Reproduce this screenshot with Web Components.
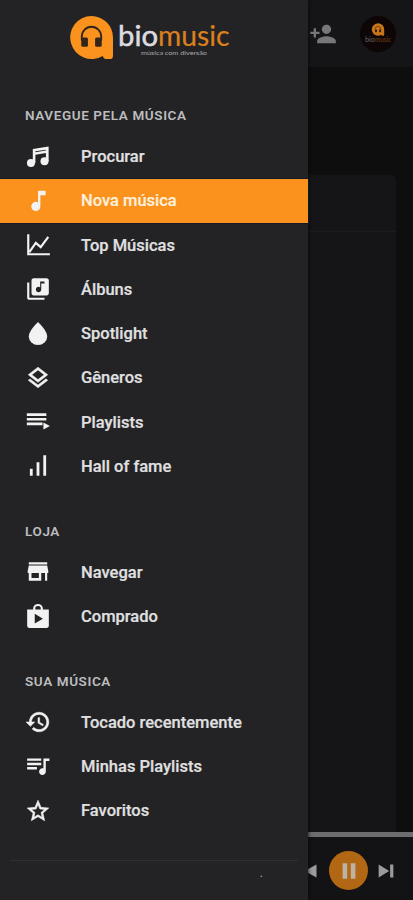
<!DOCTYPE html>
<html lang="pt-BR">
<head>
<meta charset="utf-8">
<title>biomusic</title>
<style>
html,body{margin:0;height:100%;background:#0e0e0f}
body{font-family:Roboto,"Liberation Sans",sans-serif;overflow:hidden}
</style>
</head>
<body>
<music-app></music-app>
<script>
const ICONS = {
  notes: '<circle cx="5.500" cy="17.500" r="3.700"/><circle cx="18" cy="16" r="3.700"/><path d="M7.200 17.500V4.700L21.800 2.400V16h-2.500V8.400L9.600 9.900v7.600zM9.600 6.700v.9l9.700-1.500v-.9z" fill-rule="evenodd"/>',
  note: '<path d="M12 2.500v10.800c-.6-.3-1.300-.5-2-.5a4.200 4.200 0 1 0 4.200 4.200V6.700H19V2.500z"/>',
  chart: '<path d="M3 2v18.500h20M4 18.500l6-8.500 4.500 4L21.500 4.500" fill="none" stroke="currentColor" stroke-width="2"/>',
  album: '<path d="M20 2H8c-1.100 0-2 .9-2 2v12c0 1.100.9 2 2 2h12c1.100 0 2-.9 2-2V4c0-1.100-.9-2-2-2zm-2 5h-3v5.500c0 1.380-1.120 2.500-2.500 2.500S10 13.880 10 12.500s1.120-2.500 2.500-2.500c.570 0 1.080.190 1.500.510V5h4v2zM4 6H2v14c0 1.100.9 2 2 2h14v-2H4V6z"/>',
  drop: '<path d="M12 1C12 1 3.500 9 3.500 14.200a8.500 8 0 0 0 17 0C20.500 9 12 1 12 1z"/>',
  layers: '<path d="M11.990 18.540l-7.370-5.730L3 14.070l9 7 9-7-1.630-1.270-7.380 5.740zM12 16l7.360-5.730L21 9l-9-7-9 7 1.630 1.270L12 16zm0-11.470L17.740 9 12 13.470 6.260 9 12 4.530z" stroke="currentColor" stroke-width=".5"/>',
  playlist: '<path d="M1.700 4h18v2.500h-18zM1.700 8.200h18v2.500h-18zM1.700 12.500h14.500v2.500H1.700zM17 12.500l6 3.200-6 3.300z"/>',
  bars: '<path d="M4.500 14.500h2.600V21H4.500zM10.700 8.500h2.600V21h-2.600zM16.900 2h2.600v19h-2.600z"/>',
  store: '<path d="M20.500 3h-17v2h17V3zM21.500 13v-2l-1-5h-17l-1 5v2h1v7h11.500v-7h3.500v7h2v-7h1zM12.800 17.500H6V13h6.800v4.500z"/>',
  bag: '<path d="M16.500 6V5a4.500 4 0 0 0-9 0v1H2v15c0 1.110.890 2 2 2h16c1.110 0 2-.890 2-2V6h-5.500zm-7-1a2.500 2.200 0 0 1 5 0v1h-5zM9 19v-9l7.500 4.500L9 19z"/>',
  history: '<path d="M13 3c-4.970 0-9 4.030-9 9H1l3.890 3.890.070.140L9 12H6c0-3.870 3.130-7 7-7s7 3.130 7 7-3.130 7-7 7c-1.930 0-3.680-.790-4.940-2.060l-1.420 1.420C8.270 19.990 10.510 21 13 21c4.970 0 9-4.030 9-9s-4.030-9-9-9zm-1 5v5l4.280 2.540.720-1.210-3.500-2.080V8H12z" stroke="currentColor" stroke-width=".5"/>',
  queue: '<path d="M15 5H2v2.200h13V5zm0 4H2v2.200h13V9zM2 15.200h9V13H2v2.200zM17 5v9.180c-.310-.110-.650-.180-1-.180-1.660 0-3 1.540-3 3.200s1.340 3 3 3 3.200-1.340 3.200-3V7.300h3.300V5H17z"/>',
  star: '<path d="M22 9.240l-7.190-.620L12 2 9.190 8.630 2 9.240l5.460 4.730L5.820 21 12 17.270 18.180 21l-1.630-7.030L22 9.240zM12 15.400l-3.760 2.270 1-4.280-3.320-2.880 4.380-.380L12 6.100l1.710 4.040 4.380.380-3.320 2.880 1 4.280L12 15.400z" stroke="currentColor" stroke-width=".5"/>',
  person: '<path d="M15 12c2.210 0 4-1.790 4-4s-1.790-4-4-4-4 1.790-4 4 1.790 4 4 4zm-9-2V7H4v3H1v2h3v3h2v-3h3v-2H6zm9 4c-2.670 0-8 1.340-8 4v2h16v-2c0-2.660-5.330-4-8-4z"/>',
  prev: '<path d="M18 5v14L5 12zM2 5h2v14H2z"/>',
  pause: '<path d="M5 3.500h5v17H5zM14 3.500h5v17h-5z"/>',
  next: '<path d="M4 5l11.500 7L4 19zM16.500 5H20v14h-3.500z"/>'
};
const define = (name, html) => customElements.define(name, class extends HTMLElement {
  constructor(){ super(); this.attachShadow({mode:'open'}).innerHTML = html; }
});

customElements.define('app-icon', class extends HTMLElement {
  connectedCallback(){
    const root = this.shadowRoot || this.attachShadow({mode:'open'});
    root.innerHTML = `<style>:host{display:block;width:26px;height:26px;flex:none}svg{display:block;width:100%;height:100%}</style>
    <svg viewBox="0 0 24 24" fill="currentColor">${ICONS[this.getAttribute('name')]}</svg>`;
  }
});

define('brand-mark', `<style>:host{display:block}svg{display:block;width:100%;height:100%}</style>
<svg viewBox="0 0 44 44"><path fill="#fb921d" d="M22 1a21 21 0 0 1 21 21v18a3 3 0 0 1-3 3h-3a4 4 0 0 1-4-3A21 21 0 1 1 22 1z"/>
<path d="M12.500 25v-4a9.500 9.500 0 0 1 19 0v4" fill="none" stroke="#33251a" stroke-width="1.800"/>
<rect x="12" y="22" width="6.500" height="9" rx="1.500" fill="#33251a"/><rect x="25.500" y="22" width="6.500" height="9" rx="1.500" fill="#33251a"/></svg>`);

define('brand-logo', `<style>:host{display:flex;height:100px;box-sizing:border-box;padding:15px 0 0 69px}
brand-mark{width:45px;height:45px;flex:none}.word{width:116px;height:50px;display:block;margin-left:3px}</style>
<brand-mark></brand-mark>
<svg class="word" viewBox="0 0 116 50" font-family="Lato,sans-serif">
<text x="1" y="31" font-size="28" fill="#dcdce0" stroke="#dcdce0" stroke-width=".5" textLength="40" lengthAdjust="spacingAndGlyphs">bio</text>
<text x="41" y="31" font-size="28" fill="#d9801f" stroke="#d9801f" stroke-width=".2" textLength="71.500" lengthAdjust="spacingAndGlyphs">music</text>
<text x="24" y="40" font-size="6.500" fill="#a9a9ab" textLength="66" lengthAdjust="spacingAndGlyphs">música com diversão</text></svg>`);

customElements.define('nav-entry', class extends HTMLElement {
  constructor(){ super(); this.attachShadow({mode:'open'}); }
  connectedCallback(){
    this.shadowRoot.innerHTML = `<style>:host{display:flex;align-items:center;height:44.250px;box-sizing:border-box;padding-left:25px;color:#e0e0e1;font-size:16.500px;font-weight:500;white-space:nowrap;-webkit-text-stroke:.2px currentColor}
    :host([active]){background:#fb921d;color:#fff0dc;box-shadow:0 0 0 1px #101a28}
    app-icon{margin-right:30px;color:#f2f2f2}</style>
    <app-icon name="${this.getAttribute('icon')}"></app-icon><span><slot></slot></span>`;
  }
});

define('nav-section', `<style>:host{display:block}
.title{display:flex;align-items:center;height:30px;padding:0 0 4.500px 25px;color:#bdbdbf;font-size:13.500px;font-weight:600;letter-spacing:.6px}
:host(:not(:first-of-type)) .title{padding-top:27px}</style>
<div class="title"><slot name="title"></slot></div><slot></slot>`);

define('side-drawer', `<style>:host{display:flex;flex-direction:column;width:308px;height:900px;background:#232325;box-shadow:0 0 4px #08080a}
nav{flex:1 1 0}footer{height:39px;margin:0 10px;border-top:1px solid #303032;color:#aaa;font-size:12px;text-align:right}
footer span{display:block;padding:5px 35px 0 0}</style>
<slot name="brand"></slot><nav><slot></slot></nav><footer><span>.</span></footer>`);

define('top-bar', `<style>:host{display:flex;align-items:center;justify-content:flex-end;height:67px;background:#151517;color:#77777a;padding-right:17px;gap:23px}
.avatar{width:36px;height:36px;border-radius:50%;background:#0d0506;display:flex;flex-direction:column;align-items:center;box-sizing:border-box;padding-top:7px}
brand-mark{width:14px;height:13px;opacity:.8}svg{width:28px;height:7px}app-icon{width:28px;height:28px}</style>
<app-icon name="person"></app-icon><div class="avatar"><brand-mark></brand-mark>
<svg viewBox="0 0 28 7" font-family="Lato,sans-serif" font-size="7"><text x="1" y="5.500" fill="#66666a" textLength="10" lengthAdjust="spacingAndGlyphs">bio</text><text x="11" y="5.500" fill="#70430d" textLength="16" lengthAdjust="spacingAndGlyphs">music</text></svg></div>`);

define('content-panel', `<style>:host{display:block;flex:1;padding:108px 17px 0 10px;background:#0e0e0f}
.card{height:100%;background:#151517;border-radius:5px 5px 0 0;overflow:hidden}.head{height:56px;border-bottom:1px solid #1c1c1e}</style>
<div class="card"><div class="head"></div></div>`);

define('player-bar', `<style>:host{display:block;height:68px;background:#131315;color:#9b9b9d}
.track{height:5px;background:#6d6d6f}.controls{display:flex;align-items:center;justify-content:flex-end;height:67px;padding-right:16px;gap:7px}
.play{width:39px;height:39px;border-radius:50%;background:#b16713;color:#bdb2a4;display:flex;align-items:center;justify-content:center}
app-icon{width:22px;height:22px}</style>
<div class="track"></div><div class="controls"><app-icon name="prev"></app-icon><div class="play"><app-icon name="pause"></app-icon></div><app-icon name="next"></app-icon></div>`);

define('music-app', `<style>:host{display:grid;width:413px;height:900px;overflow:hidden}
.page,side-drawer{grid-area:1/1}.page{display:flex;flex-direction:column;min-height:0}
side-drawer{position:relative}</style>
<div class="page"><top-bar></top-bar><content-panel></content-panel><player-bar></player-bar></div>
<side-drawer><brand-logo slot="brand"></brand-logo>
<nav-section><span slot="title">NAVEGUE PELA MÚSICA</span>
<nav-entry icon="notes">Procurar</nav-entry><nav-entry icon="note" active>Nova música</nav-entry><nav-entry icon="chart">Top Músicas</nav-entry><nav-entry icon="album">Álbuns</nav-entry><nav-entry icon="drop">Spotlight</nav-entry><nav-entry icon="layers">Gêneros</nav-entry><nav-entry icon="playlist">Playlists</nav-entry><nav-entry icon="bars">Hall of fame</nav-entry></nav-section>
<nav-section><span slot="title">LOJA</span><nav-entry icon="store">Navegar</nav-entry><nav-entry icon="bag">Comprado</nav-entry></nav-section>
<nav-section><span slot="title">SUA MÚSICA</span><nav-entry icon="history">Tocado recentemente</nav-entry><nav-entry icon="queue">Minhas Playlists</nav-entry><nav-entry icon="star">Favoritos</nav-entry></nav-section>
</side-drawer>`);
</script>
</body>
</html>
